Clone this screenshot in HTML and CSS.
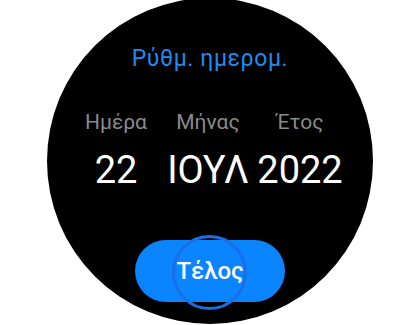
FILE: index.html
```html
<!DOCTYPE html>
<html lang="el">
<head>
<meta charset="utf-8">
<link rel="stylesheet" href="styles.css">
</head>
<body>
<div class="watch">
  <div class="title">Ρύθμ. ημερομ.</div>
  <div class="picker">
    <div class="label">Ημέρα</div>
    <div class="label">Μήνας</div>
    <div class="label">Έτος</div>
    <div class="value">22</div>
    <div class="value">ΙΟΥΛ</div>
    <div class="value">2022</div>
  </div>
  <div class="button">Τέλος<span class="touch"></span></div>
</div>
</body>
</html>
```
FILE: styles.css
```css
html, body {
  margin: 0;
  padding: 0;
  background: #ffffff;
  overflow: hidden;
}
body {
  width: 420px;
  height: 325px;
  font-family: Roboto, "Noto Sans", sans-serif;
}
.watch {
  width: 326px;
  height: 326px;
  margin: -2px 0 0 47px;
  border-radius: 50%;
  background: #000000;
  display: flex;
  flex-direction: column;
  align-items: center;
  box-sizing: border-box;
  padding-top: 48px;
}
.title {
  font-size: 23px;
  line-height: 25px;
  letter-spacing: 0.6px;
  color: #1b8cf5;
}
.picker {
  margin-top: 39px;
  display: grid;
  grid-template-columns: 92px 92px 92px;
  padding-right: 4px;
  text-align: center;
}
.label {
  font-size: 21px;
  line-height: 24px;
  color: #8a8a8a;
}
.value {
  margin-top: 14px;
  font-size: 38px;
  line-height: 44px;
  color: #ffffff;
}
.button {
  position: relative;
  margin-top: 48px;
  width: 150px;
  height: 62px;
  border-radius: 31px;
  background: #0b84ff;
  color: #ffffff;
  font-size: 24px;
  font-weight: 500;
  display: flex;
  align-items: center;
  justify-content: center;
}
.touch {
  position: absolute;
  left: 37px;
  top: -5px;
  width: 75px;
  height: 75px;
  box-sizing: border-box;
  border: 3px solid #1a6ee6;
  border-radius: 50%;
}
```
